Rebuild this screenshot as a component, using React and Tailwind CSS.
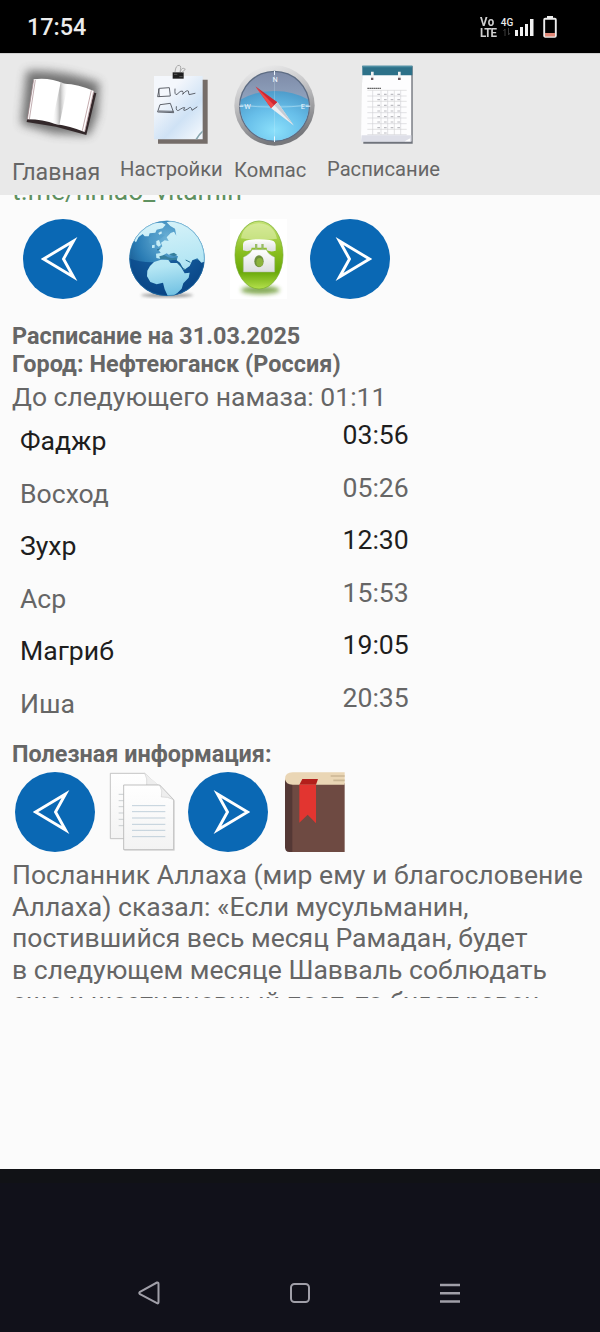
import clsx from 'clsx'

const PRAYERS = [
  { name: 'Фаджр', time: '03:56', main: true },
  { name: 'Восход', time: '05:26' },
  { name: 'Зухр', time: '12:30', main: true },
  { name: 'Аср', time: '15:53' },
  { name: 'Магриб', time: '19:05', main: true },
  { name: 'Иша', time: '20:35' },
]

const HADITH_LINES = [
  'Посланник Аллаха (мир ему и благословение',
  'Аллаха) сказал: «Если мусульманин,',
  'постившийся весь месяц Рамадан, будет',
  'в следующем месяце Шавваль соблюдать',
  'еще и шестидневный пост, то будет равен',
]

function OpenBookIcon() {
  return (
    <svg viewBox="30 180 300 255" className="h-[85px] w-[100px] shrink-0">
      <defs>
        <filter id="book-glow" x="-30%" y="-30%" width="160%" height="160%">
          <feGaussianBlur stdDeviation="15" />
        </filter>
        <linearGradient id="book-fold" x1="0" x2="1">
          <stop offset="0" stopColor="#fff" stopOpacity="0" />
          <stop offset=".5" stopColor="#b5b5b5" />
          <stop offset="1" stopColor="#fff" stopOpacity="0" />
        </linearGradient>
      </defs>
      <path d="M80 213Q180 208 298 248L292 345L268 405L160 400L64 372Z" fill="#4a4a4a" opacity=".75" filter="url(#book-glow)" />
      <path d="M101 242L80 366L168 380L259 405L289 280L200 256Z" fill="#33282a" />
      <path d="M101 238Q150 232 192 251Q235 252 282 273L254 396Q210 378 166 372Q130 358 82 358Z" fill="#fff" />
      <path d="M101 240L82 358M106 240L88 358" stroke="#a5878b" strokeWidth="2" />
      <path d="M281 274L254 395M274 271L247 392" stroke="#b99a9d" strokeWidth="2.5" />
      <path d="M182 247L204 253L178 375L156 370Z" fill="url(#book-fold)" />
    </svg>
  )
}

function ClipboardIcon() {
  return (
    <svg viewBox="450 190 180 246" className="h-[82px] w-[60px] shrink-0">
      <defs>
        <linearGradient id="clip-paper" x1="0" y1="0" x2=".8" y2="1">
          <stop offset=".3" stopColor="#f4f7fc" />
          <stop offset=".7" stopColor="#cfe2f5" />
          <stop offset="1" stopColor="#eef5fc" />
        </linearGradient>
      </defs>
      <path d="M474 240H623V432H474Z" fill="#756d69" />
      <path d="M462 229H608V419H462Z" fill="url(#clip-paper)" />
      <path d="M586 419Q596 402 608 392V398Q598 408 592 419Z" fill="#86a5ae" />
      <path d="M518 218H551V237H518Z" fill="#1e1e1e" />
      <path d="M525 217Q527 196 538 197Q545 199 540 217M541 217Q545 200 556 209L546 218" fill="none" stroke="#a9a9a9" strokeWidth="3" />
      <path d="M522 224H532M538 231H548" stroke="#777" strokeWidth="2" />
      <g fill="none" stroke="#43474f" strokeWidth="2.5" strokeLinecap="round">
        <path d="M479 266L508 264L511 289L474 291ZM476 268L478 290" />
        <path d="M525 268Q523 288 531 284Q542 272 547 274Q552 279 548 284Q560 270 565 274L567 285L585 281" />
        <path d="M481 315L511 311L521 339L474 337ZM477 334L519 335" />
        <path d="M529 321Q527 335 536 332Q550 322 554 324Q545 338 563 328Q574 317 576 332L591 322" />
      </g>
    </svg>
  )
}

function CompassIcon() {
  return (
    <svg viewBox="23 27 250 250" className="size-[83px] shrink-0">
      <defs>
        <linearGradient id="compass-ring" x1="0" y1="0" x2=".3" y2="1">
          <stop offset="0" stopColor="#f4f4f4" />
          <stop offset=".45" stopColor="#c4c4c6" />
          <stop offset="1" stopColor="#77787c" />
        </linearGradient>
        <linearGradient id="compass-sky" x1="0" y1="0" x2="0" y2="1">
          <stop offset="0" stopColor="#7e8ba8" />
          <stop offset="1" stopColor="#a9c4dc" />
        </linearGradient>
        <radialGradient id="compass-sea" cx=".5" cy=".8" r=".8">
          <stop offset="0" stopColor="#8be0fb" />
          <stop offset=".55" stopColor="#67bee9" />
          <stop offset="1" stopColor="#4e9ccb" />
        </radialGradient>
      </defs>
      <circle cx="148" cy="152" r="121" fill="url(#compass-ring)" />
      <circle cx="148" cy="154" r="107" fill="#5d6c83" />
      <circle cx="148" cy="154" r="103" fill="url(#compass-sky)" />
      <path d="M47 134Q90 108 148 108Q206 108 249 134A103 103 0 1 1 47 134Z" fill="url(#compass-sea)" />
      <path d="M46 150Q148 165 250 150" fill="none" stroke="#b6e4f7" strokeWidth="3" opacity=".5" />
      <path d="M148 53V257M45 154H251" stroke="#d5f1fb" strokeWidth="2" opacity=".35" />
      <path d="M148 48V60M148 245V262M42 154H54M242 154H256" stroke="#eef8ff" strokeWidth="3" />
      <g fill="#f2f8ff" fontFamily="Roboto, sans-serif" fontSize="22" textAnchor="middle">
        <text x="150" y="81">N</text>
        <text x="67" y="162">W</text>
        <text x="233" y="162">E</text>
      </g>
      <path d="M91 95L157 142L138 160Z" fill="#cf2630" />
      <path d="M91 95L147 151L138 160Z" fill="#ee4a4a" />
      <path d="M157 142L206 212L138 160Z" fill="#e9edf1" />
      <path d="M157 142L206 212L148 151Z" fill="#c6cbd4" />
    </svg>
  )
}

function CalendarIcon() {
  return (
    <svg viewBox="177 190 168 246" className="h-[82px] w-[56px] shrink-0">
      <path d="M186 200H338V432H190Z" fill="#70747c" />
      <path d="M187 198H334V425H183Z" fill="#fdfdfe" />
      <path d="M185 407H334V426H183Z" fill="#dedfe8" />
      <path d="M187 198H337V227H187Z" fill="#2d7189" />
      <path d="M187 198H337V203H187Z" fill="#4e8ea3" />
      <path d="M217 216V236M298 216V236" stroke="#f2f2f2" strokeWidth="8" />
      <path d="M213 234H220V241H213ZM294 234H302V241H294Z" fill="#6b5a60" />
      <path d="M202 266H243" stroke="#666" strokeWidth="4" strokeDasharray="5 1" />
      <g stroke="#d0d0d4" strokeWidth="1.8">
        <path d="M202 272H320M202 289H320M202 305H320M202 322H320M202 339H320M202 355H320M202 372H320M202 389H320M202 405H320" />
        <path d="M218 272V405M243 272V405M263 272V405M283 272V405M302 272V405" />
      </g>
      <g stroke="#bdbdc2" strokeWidth="3.5" strokeDasharray="8 12">
        <path d="M232 284H304M232 300H304M232 317H304M232 334H304M232 351H304M232 367H304M232 384H304M232 400H264" />
      </g>
      <path d="M314 425L331 416L330 425Z" fill="#fff" />
    </svg>
  )
}

function ArrowButton({ right }) {
  return (
    <svg viewBox="0 0 80 80" className={clsx('size-20 shrink-0', right && '-scale-x-100')}>
      <circle cx="40" cy="40" r="40" fill="#0a68b4" />
      <path d="M20.5 40L50.5 22L40.500 40L50.5 58Z" fill="none" stroke="#fff" strokeWidth="2.9" strokeMiterlimit="8" />
    </svg>
  )
}

function GlobeIcon() {
  return (
    <svg viewBox="381 87 240 240" className="size-20 shrink-0">
      <defs>
        <radialGradient id="globe-sea" cx=".5" cy=".25" r=".8">
          <stop offset="0" stopColor="#6fb4d8" />
          <stop offset=".5" stopColor="#2b7db5" />
          <stop offset="1" stopColor="#08396f" />
        </radialGradient>
        <linearGradient id="globe-land" gradientUnits="userSpaceOnUse" x1="480" y1="90" x2="520" y2="318">
          <stop offset="0" stopColor="#d8f3f9" />
          <stop offset=".6" stopColor="#b4e6f4" />
          <stop offset="1" stopColor="#6fc0e2" />
        </linearGradient>
        <clipPath id="globe-clip">
          <circle cx="501" cy="205" r="113" />
        </clipPath>
        <filter id="globe-blur" x="-20%" y="-100%" width="140%" height="300%">
          <feGaussianBlur stdDeviation="4" />
        </filter>
      </defs>
      <ellipse cx="501" cy="316" rx="78" ry="6" fill="#555" opacity=".6" filter="url(#globe-blur)" />
      <circle cx="501" cy="205" r="113" fill="url(#globe-sea)" />
      <g clipPath="url(#globe-clip)">
        <path d="M387 205Q440 225 501 212Q570 200 614 216V320H387Z" fill="#07468a" opacity=".7" />
        <g fill="url(#globe-land)">
          <path d="M400 150L415 128L432 112L456 99L486 98L497 104L488 115L470 119L466 128L449 130L446 139L434 139L428 132L416 141L408 157Z" />
          <path d="M500 97L525 90L580 104L625 150V212L604 218L592 205L577 211L569 228L552 240L540 218L530 211L534 199L520 193L509 196L500 190L489 196L484 207L469 204L468 191L482 189L476 179L487 169L483 158L494 151L506 153L500 142L512 129L522 125L529 137L525 116L511 108Z" />
          <path d="M450 228L462 216L483 209L505 210L512 219L532 219L543 231L554 250L569 248L566 263L550 280L545 296L532 309L518 318L503 317L494 298L489 278L470 283L451 276L441 259L442 242Z" />
          <path d="M469 153L477 150L483 165L476 170L469 164ZM456 166L464 164L464 173L456 174ZM475 129L484 124L486 130L478 135Z" />
        </g>
        <path d="M478 199L493 195L504 202L516 205L529 202L531 209L511 211L496 206L481 208ZM506 193L522 188L532 195L522 199Z" fill="#367f9d" />
        <path d="M532 218L551 237L558 239M557 210L571 217M471 180L481 176" fill="none" stroke="#246e91" strokeWidth="3" />
        <path d="M446 143Q470 130 495 135Q480 150 466 151Q458 165 446 160Z" fill="#4d9cc9" opacity=".5" />
      </g>
      <circle cx="501" cy="205" r="112" fill="none" stroke="#2e83b8" strokeWidth="2" opacity=".7" />
    </svg>
  )
}

function PhoneIcon() {
  return (
    <svg viewBox="90 87 171 240" className="h-20 w-[57px] shrink-0 bg-white">
      <defs>
        <linearGradient id="phone-bg" x1="0" y1="0" x2="0" y2="1">
          <stop offset="0" stopColor="#c6e377" />
          <stop offset=".45" stopColor="#8abf20" />
          <stop offset=".75" stopColor="#6aa90a" />
          <stop offset="1" stopColor="#b4e04c" />
        </linearGradient>
        <linearGradient id="phone-body" x1="0" y1="0" x2="0" y2="1">
          <stop offset="0" stopColor="#fff" />
          <stop offset="1" stopColor="#dcdedd" />
        </linearGradient>
        <filter id="phone-blur" x="-20%" y="-60%" width="140%" height="220%">
          <feGaussianBlur stdDeviation="6" />
        </filter>
      </defs>
      <ellipse cx="181" cy="300" rx="58" ry="13" fill="#568a19" opacity=".7" filter="url(#phone-blur)" />
      <ellipse cx="177" cy="195" rx="72" ry="102" fill="url(#phone-bg)" stroke="#74ab2c" strokeWidth="2" />
      <path d="M123 145Q130 102 177 100Q222 103 231 146Q177 154 123 145Z" fill="#e5f3b7" opacity=".55" />
      <path d="M129 163Q130 151 146 150Q177 145 209 150Q225 151 227 164V182Q212 187 201 181L200 173H155L153 181Q141 186 129 181Z" fill="url(#phone-body)" />
      <path d="M165 162H172V179H165ZM184 162H191V179H184Z" fill="#98bc65" />
      <path d="M157 179H199Q203 192 224 202V246H130V202Q151 192 157 179Z" fill="url(#phone-body)" stroke="#a8b89a" strokeWidth="1.5" />
      <ellipse cx="177" cy="214" rx="14" ry="18" fill="#6e8f3c" />
      <ellipse cx="179" cy="217" rx="10" ry="13" fill="#8cb33c" />
    </svg>
  )
}

function DocumentsIcon() {
  return (
    <svg viewBox="327 96 198 240" className="h-20 w-[66px] shrink-0">
      <defs>
        <linearGradient id="page" x1="0" y1="0" x2="0" y2="1">
          <stop offset="0" stopColor="#fff" />
          <stop offset="1" stopColor="#f3f3f3" />
        </linearGradient>
      </defs>
      <path d="M331 100H434L476 138V296H331Z" fill="url(#page)" stroke="#b9b9b9" strokeWidth="2.5" />
      <path d="M434 100Q443 115 440 136H476" fill="#eee" stroke="#c2c2c2" strokeWidth="1.5" />
      <path d="M356 163H376M356 182H376M356 200H376M356 219H376M356 238H376M356 257H376" stroke="#c0c6ca" strokeWidth="2.5" />
      <path d="M371 135H479L521 179V329H371Z" fill="url(#page)" stroke="#b3b3b3" strokeWidth="2.5" />
      <path d="M523 181V331H373" fill="none" stroke="#ccc" strokeWidth="2" />
      <path d="M479 136Q489 151 484 171Q503 169 520 179Z" fill="#eee" stroke="#c2c2c2" strokeWidth="1.5" />
      <path d="M396 197H496M396 215H496M396 234H496M396 253H496M396 271H496M396 290H496" stroke="#b4c6d4" strokeWidth="2.5" />
    </svg>
  )
}

function BookmarkBookIcon() {
  return (
    <svg viewBox="855 96 180 240" className="h-20 w-[60px] shrink-0">
      <path d="M855 118L880 130V336H868Q855 336 855 322Z" fill="#543835" />
      <path d="M877 130H1034V336H877Z" fill="#6e4a42" />
      <path d="M1034 97H878Q855 97 855 117Q857 134 878 134H1034Z" fill="#ead6b5" />
      <path d="M992 108H1034M1000 121H1034" stroke="#cbb795" strokeWidth="5" />
      <path d="M907 117H954L948 134H898Z" fill="#b31f1b" />
      <path d="M898 134H948V250L923 224L898 248Z" fill="#e23530" />
    </svg>
  )
}

const TABS = [
  { label: 'Главная', icon: <OpenBookIcon />, cell: 'w-[108px]', art: '-ml-0.5 pt-1.5', text: 'pt-1 text-[23.2px]' },
  { label: 'Настройки', icon: <ClipboardIcon />, cell: 'w-[114px]', art: 'pl-[30px] pt-[9px]', text: 'pt-px text-[20.200px]' },
  { label: 'Компас', icon: <CompassIcon />, cell: 'w-[93px]', art: '-ml-px pt-2.5', text: 'pt-0.5 text-[20.200px]' },
  { label: 'Расписание', icon: <CalendarIcon />, cell: 'w-[130px]', art: 'pl-8 pt-[9px]', text: 'pt-px text-[20.200px]' },
]

function StatusBar() {
  return (
    <div className="flex h-[53px] shrink-0 items-center bg-black pr-[43px] pl-[27px] text-[#ececec]">
      <span className="mt-[3px] text-[23.4px] font-medium">17:54</span>
      <div className="ml-auto mt-px flex items-center">
        <div className="w-5 origin-left scale-x-85 text-[13.5px] leading-[11px] font-bold text-[#d0d0d0]">
          <div className="tracking-wider">Vo</div>
          <div className="-tracking-[0.9px]">LTE</div>
        </div>
        <div className="flex w-[14px] flex-col items-center text-[10px] leading-[9px] font-medium">
          <span>4G</span>
          <svg viewBox="0 0 8 8" className="mt-px size-2">
            <path d="M2 8V1L.5 3M5.5 0V7L7 5" fill="none" stroke="#3c3c3c" />
          </svg>
        </div>
        <svg viewBox="0 0 19 18" className="ml-px h-[18px] w-[19px]">
          <path d="M0 12H3V18H0ZM5 9H8V18H5ZM10 6H13V18H10ZM15 1H18.5V18H15Z" fill="#f1f1f1" />
        </svg>
        <svg viewBox="0 0 14 22" className="ml-[9px] h-[22px] w-[14px]">
          <path d="M4 0H10V3H4Z" fill="#eee" />
          <rect x="1.2" y="2.7" width="11.6" height="18" rx="1" fill="none" stroke="#eee" strokeWidth="1.9" />
          <path d="M2 17H12V20.500H2Z" fill="#df8776" />
        </svg>
      </div>
    </div>
  )
}

function TopTabs() {
  return (
    <nav className="flex h-[142px] shrink-0 border-t border-[#cfcfcf] bg-[#e9e9e9] pl-3">
      {TABS.map((tab) => (
        <div key={tab.label} className={clsx('shrink-0', tab.cell)}>
          <div className={clsx('flex h-[100px] items-start', tab.art)}>{tab.icon}</div>
          <div className={clsx('leading-7 whitespace-nowrap', tab.text)}>{tab.label}</div>
        </div>
      ))}
    </nav>
  )
}

function NavBar() {
  return (
    <footer className="flex h-[163px] shrink-0 items-end justify-between border-t-[14px] border-[#111216] bg-[#11111a] pr-[138px] pb-[27px] pl-[137px]">
      <svg viewBox="0 0 24 24" className="size-6" fill="none" stroke="#a09fa8" strokeWidth="2">
        <path d="M20 1.5Q21.5 1 21.500 3V21Q21.500 23 20 22.200L3 13.200Q1.500 12 3 10.800Z" strokeLinejoin="round" />
      </svg>
      <svg viewBox="0 0 24 24" className="ml-px size-6" fill="none" stroke="#a09fa8" strokeWidth="2">
        <rect x="3" y="3" width="18" height="18" rx="3.500" />
      </svg>
      <svg viewBox="0 0 24 24" className="size-6" fill="none" stroke="#a09fa8" strokeWidth="2.4">
        <path d="M2 4H22M2 12.200H22M2 20.500H22" />
      </svg>
    </footer>
  )
}

export default function App() {
  return (
    <div className="flex h-[1332px] w-[600px] flex-col overflow-hidden bg-[#fbfbfb] font-[Roboto,sans-serif] text-[#666]">
      <StatusBar />
      <TopTabs />

      <main className="h-[803px] shrink-0 overflow-hidden">
        <div className="-mt-5 h-11 pl-3 text-[26.5px] leading-8 text-[#5f9160]">t.me/hmao_vitamin</div>
        <div className="flex h-20 pl-[23px]">
          <ArrowButton />
          <div className="ml-6">
            <GlobeIcon />
          </div>
          <div className="ml-[23px]">
            <PhoneIcon />
          </div>
          <div className="ml-[23px]">
            <ArrowButton right />
          </div>
        </div>

        <div className="mt-6 pl-3 text-[23.4px] leading-[27.5px] font-bold">
          <div>Расписание на 31.03.2025</div>
          <div className="tracking-[0.05px]">Город: Нефтеюганск (Россия)</div>
        </div>
        <div className="mt-[3px] pl-3 text-[26.5px] leading-8">До следующего намаза: 01:11</div>

        <div>
          {PRAYERS.map(({ name, time, main }) => (
            <div
              key={name}
              className={clsx('flex h-[52.500px] pl-5 text-[26.6px] leading-8', main && 'text-[#1e1e1e]')}
            >
              <span className="w-[322.500px] pt-3">{name}</span>
              <span className="pt-1.5">{time}</span>
            </div>
          ))}
        </div>

        <div className="mt-3 pl-3 text-[23.4px] leading-7 font-bold">Полезная информация:</div>
        <div className="mt-1 flex pl-[15px]">
          <ArrowButton />
          <div className="ml-3.5">
            <DocumentsIcon />
          </div>
          <div className="ml-[13px]">
            <ArrowButton right />
          </div>
          <div className="ml-[17px]">
            <BookmarkBookIcon />
          </div>
        </div>

        <div className="mt-[7px] pl-3 text-[26.55px] leading-[31.700px] whitespace-nowrap">
          {HADITH_LINES.map((line) => (
            <div key={line}>{line}</div>
          ))}
        </div>
      </main>

      <div className="grow" />
      <NavBar />
    </div>
  )
}
